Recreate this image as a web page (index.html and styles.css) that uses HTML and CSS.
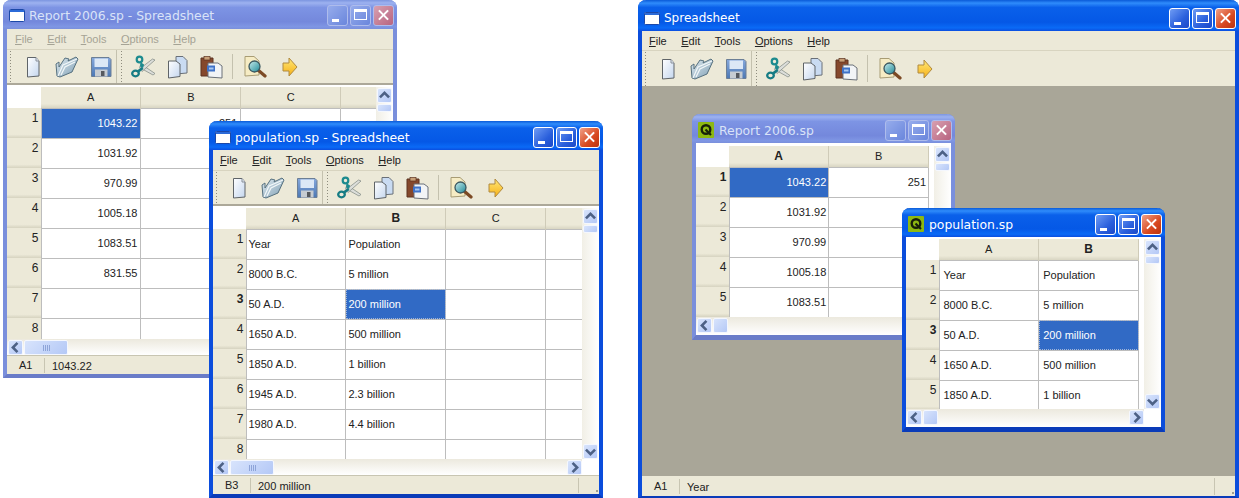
FILE: index.html
```html
<!DOCTYPE html>
<html lang="en">
<head>
    <meta charset="UTF-8">
    <title>Spreadsheet</title>
    <link rel="stylesheet" href="styles.css">
</head>
<body>
    <!-- shared toolbar and title icons -->
    <svg class="icon-defs" xmlns="http://www.w3.org/2000/svg">
        <defs>
            <linearGradient id="paper" x1="0" y1="0" x2="1" y2="1"><stop offset="0" stop-color="#ffffff"/><stop offset="1" stop-color="#c4d6ee"/></linearGradient>
            <linearGradient id="folder" x1="0" y1="0" x2="1" y2="1"><stop offset="0" stop-color="#dfeaf0"/><stop offset="1" stop-color="#7f9fb4"/></linearGradient>
            <linearGradient id="disk" x1="0" y1="0" x2="0" y2="1"><stop offset="0" stop-color="#86a8dc"/><stop offset="1" stop-color="#4c78b4"/></linearGradient>
            <linearGradient id="arrow" x1="0" y1="0" x2="0" y2="1"><stop offset="0" stop-color="#ffe877"/><stop offset="1" stop-color="#f6b016"/></linearGradient>
            <linearGradient id="lens" x1="0" y1="0" x2="1" y2="1"><stop offset="0" stop-color="#c8ecec"/><stop offset="1" stop-color="#1f8a98"/></linearGradient>
            <symbol id="i-new" viewBox="0 0 24 24">
                <path d="M6.5 2.500H15L18 6V21L6.500 22Z" fill="url(#paper)" stroke="#5f6468" stroke-linejoin="round"/>
                <path d="M15 2.500V6H18" fill="#dfe8f2" stroke="#8a9098"/>
            </symbol>
            <symbol id="i-open" viewBox="0 0 24 24">
                <path d="M2 21L1 9L4 7V12L10 3L14 4L13 6L21 2L23 4L17 17L5 22Z" fill="url(#folder)" stroke="#56707e" stroke-linejoin="round"/>
                <path d="M3 21L8 10L22 4M6 20L10 12L20 7" fill="none" stroke="#f2f7f8" stroke-width="1.2"/>
            </symbol>
            <symbol id="i-save" viewBox="0 0 24 24">
                <path d="M2.5 2.500H20L22 4.500V21.500H2.500Z" fill="url(#disk)" stroke="#6c7f96" stroke-linejoin="round"/>
                <rect x="5.500" y="3.500" width="13.500" height="8.500" fill="#dce8f6"/>
                <rect x="6" y="14.500" width="12.500" height="7" fill="#c6ccd2"/>
                <rect x="12" y="16" width="3.500" height="5" fill="#55595e"/>
            </symbol>
            <symbol id="i-cut" viewBox="0 0 24 24">
                <path d="M10 9L24 18.500L22 20L8.500 12.500Z" fill="#dcdeda" stroke="#7d8580" stroke-width=".7"/>
                <path d="M8.500 14L21.500 4L24 5L11 16.500Z" fill="#dcdeda" stroke="#7d8580" stroke-width=".7"/>
                <circle cx="8.500" cy="4.500" r="2.800" fill="none" stroke="#1d8b8f" stroke-width="2.200"/>
                <path d="M9.500 7L13 9.500L12 13L9 11.500Z" fill="#1d8b8f"/>
                <ellipse cx="4.500" cy="18.500" rx="3.300" ry="2.800" fill="none" stroke="#167c84" stroke-width="2.300"/>
                <path d="M6 15.500L11 12L12.500 14L8 17.500Z" fill="#167c84"/>
            </symbol>
            <symbol id="i-copy" viewBox="0 0 24 24">
                <path d="M11 1.500H18L22 5.500V18L11 19Z" fill="#c9dbf2" stroke="#6a7078" stroke-linejoin="round"/>
                <path d="M3.500 6H11L15 9V21.500L3.500 23Z" fill="url(#paper)" stroke="#5f6468" stroke-linejoin="round"/>
            </symbol>
            <symbol id="i-paste" viewBox="0 0 24 24">
                <path d="M2 3H14V21H2Z" fill="#85482c" stroke="#5c3320"/>
                <rect x="5" y="1.500" width="6" height="3.500" fill="#c8a078" stroke="#5c3320" stroke-width=".7"/>
                <path d="M9 8H19L23 11V23L9 22Z" fill="#f2f4f6" stroke="#6a7078" stroke-linejoin="round"/>
                <rect x="8" y="10.500" width="8" height="6" fill="#3f72c8"/>
                <rect x="10" y="12.500" width="4.500" height="2" fill="#a8c8f2"/>
            </symbol>
            <symbol id="i-find" viewBox="0 0 24 24">
                <path d="M2 1.500H11L16 6V20L2 21Z" fill="#f6ecc4" stroke="#a89c74" stroke-linejoin="round"/>
                <path d="M15 15L22 21" stroke="#7c4a24" stroke-width="3.200" stroke-linecap="round"/>
                <circle cx="11.500" cy="11.500" r="5.500" fill="url(#lens)" stroke="#3c5860" stroke-width="1.300"/>
            </symbol>
            <symbol id="i-goto" viewBox="0 0 24 24">
                <path d="M6 8H12V3L20 12L12 21V16H6Z" fill="url(#arrow)" stroke="#b08a40" stroke-linejoin="round"/>
            </symbol>
            <symbol id="i-app" viewBox="0 0 16 13">
                <rect x=".5" y=".5" width="15" height="12" rx="1" fill="#ffffff" stroke="#1c48a8"/>
                <rect x="1" y="1" width="14" height="2" fill="#2b6ad8"/>
            </symbol>
            <symbol id="i-qt" viewBox="0 0 16 16">
                <rect width="16" height="16" rx="1" fill="#8db812"/>
                <circle cx="8" cy="7.500" r="4.300" fill="none" stroke="#17200a" stroke-width="2.400"/>
                <path d="M7.500 7.500L13 13" stroke="#17200a" stroke-width="2.200"/>
            </symbol>
            <symbol id="i-up" viewBox="0 0 10 10"><path d="M1.500 6.500L5 3L8.500 6.500" fill="none" stroke="#4d6185" stroke-width="2"/></symbol>
            <symbol id="i-down" viewBox="0 0 10 10"><path d="M1.500 3.500L5 7L8.500 3.500" fill="none" stroke="#4d6185" stroke-width="2"/></symbol>
            <symbol id="i-left" viewBox="0 0 10 10"><path d="M6.500 1.500L3 5L6.500 8.500" fill="none" stroke="#4d6185" stroke-width="2"/></symbol>
            <symbol id="i-right" viewBox="0 0 10 10"><path d="M3.500 1.500L7 5L3.500 8.500" fill="none" stroke="#4d6185" stroke-width="2"/></symbol>
        </defs>
    </svg>

    <!-- Report 2006, inactive top-level window -->
    <div class="window inactive win-report">
        <div class="titlebar">
            <svg class="title-icon"><use href="#i-app"/></svg>
            <span class="title-text">Report 2006.sp - Spreadsheet</span>
            <div class="title-buttons"><span class="tb tb-min"></span><span class="tb tb-max"></span><span class="tb tb-close"></span></div>
        </div>
        <div class="menubar"><span><u>F</u>ile</span><span><u>E</u>dit</span><span><u>T</u>ools</span><span><u>O</u>ptions</span><span><u>H</u>elp</span></div>
        <div class="toolbar">
            <div class="tool-group">
                <svg class="tool"><use href="#i-new"/></svg><svg class="tool"><use href="#i-open"/></svg><svg class="tool"><use href="#i-save"/></svg>
            </div>
            <div class="tool-group">
                <svg class="tool"><use href="#i-cut"/></svg><svg class="tool"><use href="#i-copy"/></svg><svg class="tool"><use href="#i-paste"/></svg><span class="tool-sep"></span><svg class="tool"><use href="#i-find"/></svg><svg class="tool"><use href="#i-goto"/></svg>
            </div>
        </div>
        <div class="sheet">
            <div class="view">
                <table class="cols-wide">
                    <thead><tr><th class="corner"></th><th>A</th><th>B</th><th>C</th><th></th></tr></thead>
                    <tbody>
                        <tr><th>1</th><td class="num selected">1043.22</td><td class="num">251</td><td></td><td></td></tr>
                        <tr><th>2</th><td class="num">1031.92</td><td></td><td></td><td></td></tr>
                        <tr><th>3</th><td class="num">970.99</td><td></td><td></td><td></td></tr>
                        <tr><th>4</th><td class="num">1005.18</td><td></td><td></td><td></td></tr>
                        <tr><th>5</th><td class="num">1083.51</td><td></td><td></td><td></td></tr>
                        <tr><th>6</th><td class="num">831.55</td><td></td><td></td><td></td></tr>
                        <tr><th>7</th><td></td><td></td><td></td><td></td></tr>
                        <tr><th>8</th><td></td><td></td><td></td><td></td></tr>
                    </tbody>
                </table>
            </div>
            <div class="vscroll"><span class="sb-btn"><svg><use href="#i-up"/></svg></span><span class="sb-thumb"></span></div>
            <div class="hscroll"><span class="sb-btn"><svg><use href="#i-left"/></svg></span><span class="sb-thumb wide"><i class="grip"></i></span></div>
        </div>
        <div class="statusbar"><span class="st-cell">A1</span><span class="st-value">1043.22</span></div>
    </div>

    <!-- population, active top-level window -->
    <div class="window active win-population">
        <div class="titlebar">
            <svg class="title-icon"><use href="#i-app"/></svg>
            <span class="title-text">population.sp - Spreadsheet</span>
            <div class="title-buttons"><span class="tb tb-min"></span><span class="tb tb-max"></span><span class="tb tb-close"></span></div>
        </div>
        <div class="menubar"><span><u>F</u>ile</span><span><u>E</u>dit</span><span><u>T</u>ools</span><span><u>O</u>ptions</span><span><u>H</u>elp</span></div>
        <div class="toolbar">
            <div class="tool-group">
                <svg class="tool"><use href="#i-new"/></svg><svg class="tool"><use href="#i-open"/></svg><svg class="tool"><use href="#i-save"/></svg>
            </div>
            <div class="tool-group">
                <svg class="tool"><use href="#i-cut"/></svg><svg class="tool"><use href="#i-copy"/></svg><svg class="tool"><use href="#i-paste"/></svg><span class="tool-sep"></span><svg class="tool"><use href="#i-find"/></svg><svg class="tool"><use href="#i-goto"/></svg>
            </div>
        </div>
        <div class="sheet">
            <div class="view">
                <table class="cols-wide">
                    <thead><tr><th class="corner"></th><th>A</th><th class="current">B</th><th>C</th><th></th></tr></thead>
                    <tbody>
                        <tr><th>1</th><td>Year</td><td>Population</td><td></td><td></td></tr>
                        <tr><th>2</th><td>8000 B.C.</td><td>5 million</td><td></td><td></td></tr>
                        <tr><th class="current">3</th><td>50 A.D.</td><td class="selected focus">200 million</td><td></td><td></td></tr>
                        <tr><th>4</th><td>1650 A.D.</td><td>500 million</td><td></td><td></td></tr>
                        <tr><th>5</th><td>1850 A.D.</td><td>1 billion</td><td></td><td></td></tr>
                        <tr><th>6</th><td>1945 A.D.</td><td>2.3 billion</td><td></td><td></td></tr>
                        <tr><th>7</th><td>1980 A.D.</td><td>4.4 billion</td><td></td><td></td></tr>
                        <tr><th>8</th><td></td><td></td><td></td><td></td></tr>
                    </tbody>
                </table>
            </div>
            <div class="vscroll"><span class="sb-btn"><svg><use href="#i-up"/></svg></span><span class="sb-thumb"></span><span class="sb-btn sb-end"><svg><use href="#i-down"/></svg></span></div>
            <div class="hscroll"><span class="sb-btn"><svg><use href="#i-left"/></svg></span><span class="sb-thumb wide"><i class="grip"></i></span><span class="sb-btn sb-end"><svg><use href="#i-right"/></svg></span></div>
        </div>
        <div class="statusbar"><span class="st-cell">B3</span><span class="st-value">200 million</span><span class="st-grip"></span></div>
    </div>

    <!-- MDI version -->
    <div class="window active win-main">
        <div class="titlebar">
            <svg class="title-icon"><use href="#i-app"/></svg>
            <span class="title-text">Spreadsheet</span>
            <div class="title-buttons"><span class="tb tb-min"></span><span class="tb tb-max"></span><span class="tb tb-close"></span></div>
        </div>
        <div class="menubar"><span><u>F</u>ile</span><span><u>E</u>dit</span><span><u>T</u>ools</span><span><u>O</u>ptions</span><span><u>H</u>elp</span></div>
        <div class="toolbar">
            <div class="tool-group">
                <svg class="tool"><use href="#i-new"/></svg><svg class="tool"><use href="#i-open"/></svg><svg class="tool"><use href="#i-save"/></svg>
            </div>
            <div class="tool-group">
                <svg class="tool"><use href="#i-cut"/></svg><svg class="tool"><use href="#i-copy"/></svg><svg class="tool"><use href="#i-paste"/></svg><span class="tool-sep"></span><svg class="tool"><use href="#i-find"/></svg><svg class="tool"><use href="#i-goto"/></svg>
            </div>
        </div>
        <div class="mdi-area">
            <div class="window inactive child child-report">
                <div class="titlebar">
                    <svg class="title-icon qt"><use href="#i-qt"/></svg>
                    <span class="title-text">Report 2006.sp</span>
                    <div class="title-buttons"><span class="tb tb-min"></span><span class="tb tb-max"></span><span class="tb tb-close"></span></div>
                </div>
                <div class="sheet">
                    <div class="view">
                        <table class="cols-child">
                            <thead><tr><th class="corner"></th><th class="current">A</th><th>B</th></tr></thead>
                            <tbody>
                                <tr><th class="current">1</th><td class="num selected">1043.22</td><td class="num">251</td></tr>
                                <tr><th>2</th><td class="num">1031.92</td><td></td></tr>
                                <tr><th>3</th><td class="num">970.99</td><td></td></tr>
                                <tr><th>4</th><td class="num">1005.18</td><td></td></tr>
                                <tr><th>5</th><td class="num">1083.51</td><td></td></tr>
                            </tbody>
                        </table>
                    </div>
                    <div class="vscroll"><span class="sb-btn"><svg><use href="#i-up"/></svg></span><span class="sb-thumb"></span></div>
                    <div class="hscroll"><span class="sb-btn"><svg><use href="#i-left"/></svg></span><span class="sb-thumb"></span></div>
                </div>
            </div>

            <div class="window active child child-population">
                <div class="titlebar">
                    <svg class="title-icon qt"><use href="#i-qt"/></svg>
                    <span class="title-text">population.sp</span>
                    <div class="title-buttons"><span class="tb tb-min"></span><span class="tb tb-max"></span><span class="tb tb-close"></span></div>
                </div>
                <div class="sheet">
                    <div class="view">
                        <table class="cols-child">
                            <thead><tr><th class="corner"></th><th>A</th><th class="current">B</th></tr></thead>
                            <tbody>
                                <tr><th>1</th><td>Year</td><td>Population</td></tr>
                                <tr><th>2</th><td>8000 B.C.</td><td>5 million</td></tr>
                                <tr><th class="current">3</th><td>50 A.D.</td><td class="selected focus">200 million</td></tr>
                                <tr><th>4</th><td>1650 A.D.</td><td>500 million</td></tr>
                                <tr><th>5</th><td>1850 A.D.</td><td>1 billion</td></tr>
                            </tbody>
                        </table>
                    </div>
                    <div class="vscroll"><span class="sb-btn"><svg><use href="#i-up"/></svg></span><span class="sb-thumb"></span><span class="sb-btn sb-end"><svg><use href="#i-down"/></svg></span></div>
                    <div class="hscroll"><span class="sb-btn"><svg><use href="#i-left"/></svg></span><span class="sb-thumb"></span><span class="sb-btn sb-end"><svg><use href="#i-right"/></svg></span></div>
                </div>
            </div>
        </div>
        <div class="statusbar"><span class="st-cell">A1</span><span class="st-value">Year</span><span class="st-grip"></span></div>
    </div>
</body>
</html>
```

FILE: styles.css
```css
html, body {
    margin: 0;
    height: 100%;
    overflow: hidden;
    background-color: white;
    font-family: "Liberation Sans", Arial, sans-serif;
    font-size: 11px;
    color: #222;
}
.icon-defs {
    position: absolute;
    width: 0;
    height: 0;
}

/* windows sit on a free desktop */
.window {
    position: absolute;
    display: flex;
    flex-direction: column;
    box-sizing: border-box;
    border-style: solid;
    border-width: 0 4px 4px;
    border-radius: 8px 8px 0 0;
    background-color: #ece9d8;
}
.window.active {
    border-color: #0b4ddc;
    border-bottom-color: #0a3bb8;
}
.window.inactive {
    border-color: #7a8fdc;
    border-bottom-color: #6a7cc8;
}
.win-report {
    left: 3px;
    top: 0;
    width: 394px;
    height: 378px;
}
.win-population {
    left: 209px;
    top: 121px;
    width: 394px;
    height: 377px;
}
.win-main {
    left: 638px;
    top: 0;
    width: 601px;
    height: 498px;
    border-bottom-width: 2px;
}
.child {
    border-bottom-width: 5px;
}
.child-report {
    left: 50px;
    top: 28px;
    width: 263px;
    height: 226px;
}
.child-population {
    left: 260px;
    top: 122px;
    width: 263px;
    height: 224px;
}

/* title bar */
.titlebar {
    display: flex;
    align-items: center;
    flex: none;
    box-sizing: border-box;
    height: 29px;
    margin: 0 -4px;
    padding: 3px 3px 0 6px;
    border-radius: 8px 8px 0 0;
    font-family: "DejaVu Sans", sans-serif;
    font-size: 12.400px;
}
.win-report > .titlebar {
    padding-top: 1px;
}
.win-main > .titlebar {
    height: 31px;
    padding-top: 5px;
    font-size: 12px;
}
.active > .titlebar {
    background: linear-gradient(#0a5ad8, #2f8cfb 10%, #0a60ea 24%, #0558e6 72%, #0a6af6 90%, #0a4ee0);
    color: white;
}
.inactive > .titlebar {
    background: linear-gradient(#7c95e0, #9db2f0 10%, #7d94e4 26%, #7488dc 75%, #7f96e4 92%, #7a8fdc);
    color: #d9e3f8;
}
.title-icon {
    flex: none;
    width: 16px;
    height: 13px;
    margin-right: 4px;
}
.title-icon.qt {
    width: 16px;
    height: 16px;
    margin: 0 5px 0 0;
}
.title-text {
    flex: 1;
    white-space: nowrap;
}
.title-buttons {
    display: flex;
    gap: 2px;
}
.tb {
    position: relative;
    box-sizing: border-box;
    width: 21px;
    height: 21px;
    border: 1px solid white;
    border-radius: 3px;
    background: linear-gradient(135deg, #6f9cf4, #2a5fdc 60%, #1b48c8);
}
.tb-close {
    background: linear-gradient(135deg, #f0a088, #d8481f 60%, #bc3410);
}
.inactive .tb {
    border-color: #aebcec;
    background: linear-gradient(135deg, #96acec, #6a86dc);
}
.inactive .tb-close {
    background: linear-gradient(135deg, #d8a0b0, #b86480);
}
.tb-min::after {
    content: "";
    position: absolute;
    left: 4px;
    bottom: 3px;
    width: 7px;
    height: 3px;
    background-color: white;
}
.tb-max::after {
    content: "";
    position: absolute;
    left: 3px;
    top: 3px;
    width: 11px;
    height: 7px;
    border: 1px solid white;
    border-top-width: 3px;
}
.tb-close::before, .tb-close::after {
    content: "";
    position: absolute;
    left: 3px;
    top: 8px;
    width: 13px;
    height: 2px;
    background-color: white;
    transform: rotate(45deg);
}
.tb-close::after {
    transform: rotate(-45deg);
}

/* menu and toolbar */
.menubar {
    display: flex;
    align-items: center;
    flex: none;
    gap: 14.500px;
    height: 21px;
    padding-left: 7px;
    border-bottom: 1px solid #d8d4c0;
    box-sizing: border-box;
}
.win-report > .menubar {
    padding-left: 8px;
}
.win-main > .menubar {
    height: 20px;
}
.inactive .menubar {
    color: #a5a395;
}
.toolbar {
    display: flex;
    flex: none;
    height: 35px;
    box-sizing: border-box;
    border-bottom: 2px solid #aca899;
}
.win-main > .toolbar {
    border-bottom: 0;
}
.tool-group {
    display: flex;
    align-items: center;
    box-sizing: border-box;
    padding-left: 9px;
    background-image: radial-gradient(#8e8c7e 1px, transparent 1px);
    background-size: 3px 3px;
    background-repeat: repeat-y;
    background-position: 2px 0;
}
.tool-group:first-child {
    width: 109px;
}
.tool-group + .tool-group {
    border-left: 1px solid #c4c1ae;
    background-position: 3px 0;
}
.tool {
    flex: none;
    width: 24px;
    height: 24px;
    margin: 0 5px;
}
.tool-sep {
    align-self: stretch;
    width: 1px;
    margin: 4px 5px 4px 4px;
    background-color: #c4c1ae;
}

/* sheet */
.sheet {
    flex: 1;
    display: grid;
    grid-template-columns: minmax(0, 1fr) 17px;
    grid-template-rows: minmax(0, 1fr) 16px;
    min-height: 0;
    padding-top: 2px;
    background-color: white;
}
.child .sheet {
    grid-template-rows: minmax(0, 1fr) 18px;
}
.child-report .sheet {
    padding-top: 3px;
}
.view {
    overflow: hidden;
    background-color: white;
}
table {
    table-layout: fixed;
    border-collapse: collapse;
}
th, td {
    box-sizing: border-box;
    padding: 0;
}
.cols-wide {
    width: 433px;
}
.cols-wide th:first-child {
    width: 33px;
}
.win-report .cols-wide {
    width: 434px;
}
.win-report .cols-wide th:first-child {
    width: 34px;
}
.cols-child {
    width: 233px;
}
.cols-child th:first-child {
    width: 33px;
}
tr {
    height: 30px;
}
thead tr {
    height: 21px;
}
thead th {
    background: linear-gradient(#ece9d8 80%, #d8d5c2);
    border-right: 1px solid #cfcbb8;
    font-weight: normal;
    text-align: center;
}
thead th.corner {
    background: white;
    border-right: 0;
}
tbody th {
    padding: 3px 2px 0 0;
    background: linear-gradient(#ece9d8 88%, #d6d3c0);
    font-weight: normal;
    text-align: right;
    vertical-align: top;
    font-size: 12px;
}
th.current {
    font-weight: bold;
    font-size: 12px;
}
td {
    padding: 0 3px 0 2px;
    border: 1px solid #bdbdbd;
    white-space: nowrap;
    overflow: hidden;
}
.cols-child td {
    padding: 0 2px 0 4px;
}
td.num {
    text-align: right;
}
td.selected {
    background-color: #316ac5;
    color: white;
}
td.focus {
    outline: 1px dotted #9fb4d8;
    outline-offset: -1px;
}

/* scroll bars */
.vscroll, .hscroll {
    display: flex;
    background: linear-gradient(90deg, #f1efe6, white);
}
.vscroll {
    flex-direction: column;
    gap: 1px;
    padding: 1px 1px 0;
}
.hscroll {
    grid-column: 1;
    gap: 1px;
    padding: 1px 0 0 1px;
    background: linear-gradient(#ece9de, white);
}
.sb-btn, .sb-thumb {
    display: block;
    flex: none;
    box-sizing: border-box;
    border: 1px solid #f4f7fe;
    border-radius: 2px;
    background: linear-gradient(135deg, #d8e4fc, #b4c8f6);
}
.sb-btn {
    width: 15px;
    height: 15px;
}
.sb-btn svg {
    display: block;
    width: 13px;
    height: 13px;
}
.sb-end {
    margin-top: auto;
}
.hscroll .sb-end {
    margin: 0 0 0 auto;
}
.vscroll .sb-thumb {
    width: 15px;
    height: 8px;
}
.hscroll .sb-thumb {
    width: 15px;
    height: 15px;
}
.hscroll .sb-thumb.wide {
    display: flex;
    align-items: center;
    justify-content: center;
    width: 44px;
}
.grip {
    width: 7px;
    height: 6px;
    background: repeating-linear-gradient(90deg, #8ea4d8 0 1px, transparent 1px 2px);
}

/* status bar */
.statusbar {
    display: flex;
    align-items: center;
    flex: none;
    height: 19px;
    padding-top: 1px;
    border-top: 1px solid #c8c5b2;
    box-sizing: border-box;
}
.st-cell {
    width: 25px;
    margin-right: 7px;
    padding-left: 12px;
    border-right: 1px solid #c8c5b2;
    line-height: 15px;
}
.st-value {
    flex: 1;
}
.st-grip {
    align-self: stretch;
    width: 20px;
    border-left: 1px solid #c8c5b2;
    margin: 1px 0;
    background-image: radial-gradient(#a09e90 1px, transparent 1px);
    background-size: 4px 4px;
    background-position: right bottom;
    background-repeat: no-repeat;
}
.win-main > .statusbar {
    height: 20px;
    border-top: 0;
}

/* mdi workspace */
.mdi-area {
    position: relative;
    flex: 1;
    background-color: #a9a698;
}
```
